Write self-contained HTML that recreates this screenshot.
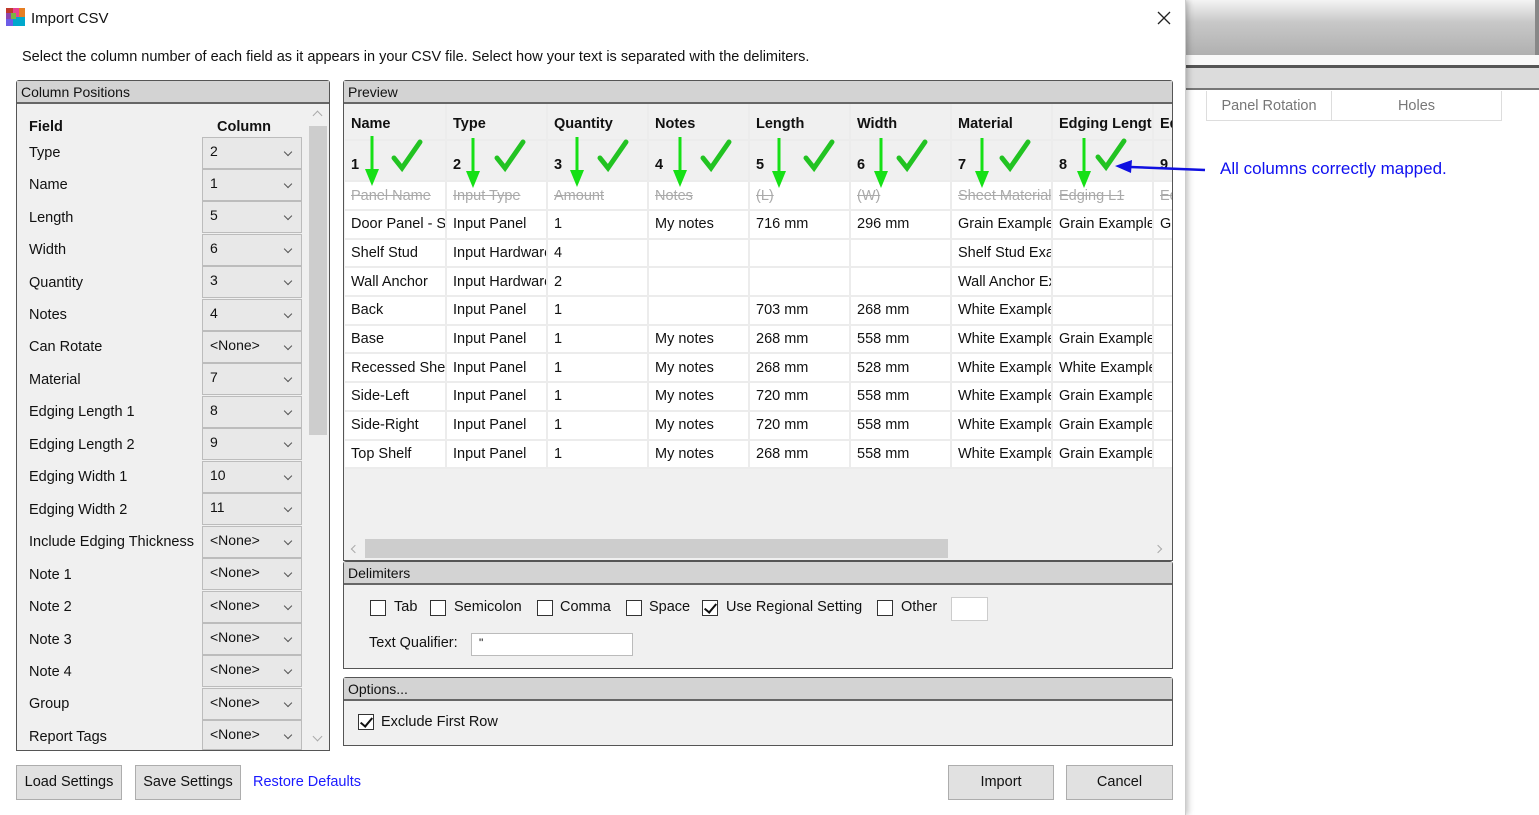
<!DOCTYPE html>
<html><head><meta charset="utf-8"><style>
*{margin:0;padding:0;box-sizing:border-box}
body{width:1539px;height:815px;overflow:hidden;background:#fff;font-family:"Liberation Sans",sans-serif;font-size:14px;color:#111;position:relative}
.a{position:absolute;white-space:nowrap}
.panel{position:absolute;border:1px solid #555;background:#f0f0f0;border-radius:3px 3px 0 0}
.ph{position:absolute;left:0;right:0;top:0;height:23px;background:#d3d3d3;border-bottom:2px solid #666;padding:3px 4px;font-size:14px}
.dd{position:absolute;left:202px;width:100px;height:32px;background:#e8e8e8;border:1px solid #bcbcbc;padding:5px 7px;font-size:14px}
.dd:after{content:"";position:absolute;right:10px;top:11px;width:5px;height:5px;border-right:1.3px solid #555;border-bottom:1.3px solid #555;transform:rotate(45deg)}
.fl{position:absolute;left:29px;font-size:14.5px}
table{border-collapse:collapse;table-layout:fixed;position:absolute;left:0;top:0;width:909px}
col{width:101px}
td{overflow:hidden;white-space:nowrap;padding:0 0 0 6px;border-right:2px solid #ececec;border-bottom:2px solid #ececec;font-size:14.5px;height:28.7px;background:#fff}
tr.h td{height:36px;font-weight:bold;background:#f0f0f0;padding-top:4px}
tr.n td{height:41px;font-weight:bold;background:#f0f0f0;padding-top:8px}
tr.s td{height:29px;color:#aaa;text-decoration:line-through}
.btn{position:absolute;top:765px;height:35px;background:#e1e1e1;border:1px solid #adadad;text-align:center;padding-top:8px;font-size:14.5px}
.cb{position:absolute;width:16px;height:16px;border:1px solid #333;background:#fff}
.ck:after{content:"";position:absolute;left:4px;top:0px;width:5px;height:10px;border-right:2px solid #111;border-bottom:2px solid #111;transform:rotate(40deg)}
</style></head><body>
<div class="a" style="left:1186px;top:0;width:353px;height:55px;background:linear-gradient(#f4f4f4,#c8c8c8 40%,#b0b0b0)"></div>
<div class="a" style="left:1186px;top:55px;width:353px;height:11px;background:#f8f8f8"></div>
<div class="a" style="left:1186px;top:65px;width:353px;height:3px;background:#555"></div>
<div class="a" style="left:1186px;top:68px;width:353px;height:22px;background:#dcdcdc;border-bottom:2px solid #777"></div>
<div class="a" style="left:1206px;top:91px;width:126px;height:30px;border-left:1px solid #ddd;border-right:1px solid #ddd;border-bottom:1px solid #ddd;color:#777;text-align:center;padding-top:7px;font-size:14.5px">Panel Rotation</div>
<div class="a" style="left:1332px;top:91px;width:170px;height:30px;border-right:1px solid #ddd;border-bottom:1px solid #ddd;color:#777;text-align:center;padding-top:7px;font-size:14.5px">Holes</div>
<div class="a" style="left:1535px;top:0;width:4px;height:55px;background:#888"></div>

<div class="a" style="left:0;top:0;width:1186px;height:815px;background:#fff;border-right:1px solid #ccc;box-shadow:2px 0 6px rgba(0,0,0,.25)"></div>
<svg class="a" style="left:6px;top:8px" width="20" height="20"><rect x="0" y="0" width="7" height="5" fill="#c0392b"/><rect x="7" y="0" width="6" height="9" fill="#e84393"/><rect x="13" y="0" width="6" height="9" fill="#e67e22"/><rect x="0" y="5" width="7" height="6" fill="#8e44ad"/><rect x="7" y="9" width="12" height="9" fill="#00a8cc"/><rect x="0" y="11" width="7" height="7" fill="#6c5ce7"/><rect x="5" y="5" width="5" height="6" fill="#7cb342"/></svg>
<div class="a" style="left:31px;top:10px;font-size:15px">Import CSV</div>
<svg class="a" style="left:1157px;top:11px" width="14" height="14"><path d="M1 1L13 13M13 1L1 13" stroke="#222" stroke-width="1.3"/></svg>
<div class="a" style="left:22px;top:49px;font-size:14.5px">Select the column number of each field as it appears in your CSV file. Select how your text is separated with the delimiters.</div>

<div class="panel" style="left:16px;top:80px;width:314px;height:671px">
<div class="ph">Column Positions</div>
<div class="a" style="left:291px;top:24px;width:20px;height:645px;background:#f0f0f0"></div>
<div class="a" style="left:292px;top:45px;width:18px;height:309px;background:#cdcdcd"></div>
<div class="a" style="left:297px;top:31px;width:7px;height:7px;border-left:1.2px solid #aaa;border-top:1.2px solid #aaa;transform:rotate(45deg)"></div>
<div class="a" style="left:297px;top:652px;width:7px;height:7px;border-right:1.2px solid #aaa;border-bottom:1.2px solid #aaa;transform:rotate(45deg)"></div>
</div>
<div class="a" style="left:29px;top:119px;font-weight:bold;font-size:14.5px">Field</div>
<div class="a" style="left:217px;top:119px;font-weight:bold;font-size:14.5px">Column</div>
<div class="fl" style="top:145px">Type</div><div class="dd" style="top:137px">2</div>
<div class="fl" style="top:177px">Name</div><div class="dd" style="top:169px">1</div>
<div class="fl" style="top:210px">Length</div><div class="dd" style="top:201px">5</div>
<div class="fl" style="top:242px">Width</div><div class="dd" style="top:234px">6</div>
<div class="fl" style="top:275px">Quantity</div><div class="dd" style="top:266px">3</div>
<div class="fl" style="top:307px">Notes</div><div class="dd" style="top:299px">4</div>
<div class="fl" style="top:339px">Can Rotate</div><div class="dd" style="top:331px">&lt;None&gt;</div>
<div class="fl" style="top:372px">Material</div><div class="dd" style="top:363px">7</div>
<div class="fl" style="top:404px">Edging Length 1</div><div class="dd" style="top:396px">8</div>
<div class="fl" style="top:437px">Edging Length 2</div><div class="dd" style="top:428px">9</div>
<div class="fl" style="top:469px">Edging Width 1</div><div class="dd" style="top:461px">10</div>
<div class="fl" style="top:502px">Edging Width 2</div><div class="dd" style="top:493px">11</div>
<div class="fl" style="top:534px">Include Edging Thickness</div><div class="dd" style="top:526px">&lt;None&gt;</div>
<div class="fl" style="top:567px">Note 1</div><div class="dd" style="top:558px">&lt;None&gt;</div>
<div class="fl" style="top:599px">Note 2</div><div class="dd" style="top:591px">&lt;None&gt;</div>
<div class="fl" style="top:632px">Note 3</div><div class="dd" style="top:623px">&lt;None&gt;</div>
<div class="fl" style="top:664px">Note 4</div><div class="dd" style="top:655px">&lt;None&gt;</div>
<div class="fl" style="top:696px">Group</div><div class="dd" style="top:688px">&lt;None&gt;</div>
<div class="fl" style="top:729px">Report Tags</div><div class="dd" style="top:720px;height:30px">&lt;None&gt;</div>

<div class="panel" style="left:343px;top:80px;width:830px;height:481px">
<div class="ph">Preview</div>
</div>
<div class="a" style="left:345px;top:104px;width:827px;height:456px;overflow:hidden;background:#f0f0f0">
<table>
<colgroup><col><col><col><col><col><col><col><col><col></colgroup>
<tr class="h"><td>Name</td><td>Type</td><td>Quantity</td><td>Notes</td><td>Length</td><td>Width</td><td>Material</td><td>Edging Lengt</td><td>Edging</td></tr>
<tr class="n"><td>1</td><td>2</td><td>3</td><td>4</td><td>5</td><td>6</td><td>7</td><td>8</td><td>9</td></tr>
<tr class="s"><td>Panel Name</td><td>Input Type</td><td>Amount</td><td>Notes</td><td>(L)</td><td>(W)</td><td>Sheet Material</td><td>Edging L1</td><td>Edging</td></tr>
<tr><td>Door Panel - Shaker</td><td>Input Panel</td><td>1</td><td>My notes</td><td>716 mm</td><td>296 mm</td><td>Grain Example</td><td>Grain Example</td><td>Grain</td></tr>
<tr><td>Shelf Stud</td><td>Input Hardware</td><td>4</td><td></td><td></td><td></td><td>Shelf Stud Example</td><td></td><td></td></tr>
<tr><td>Wall Anchor</td><td>Input Hardware</td><td>2</td><td></td><td></td><td></td><td>Wall Anchor Example</td><td></td><td></td></tr>
<tr><td>Back</td><td>Input Panel</td><td>1</td><td></td><td>703 mm</td><td>268 mm</td><td>White Example</td><td></td><td></td></tr>
<tr><td>Base</td><td>Input Panel</td><td>1</td><td>My notes</td><td>268 mm</td><td>558 mm</td><td>White Example</td><td>Grain Example</td><td></td></tr>
<tr><td>Recessed Shelf</td><td>Input Panel</td><td>1</td><td>My notes</td><td>268 mm</td><td>528 mm</td><td>White Example</td><td>White Example</td><td></td></tr>
<tr><td>Side-Left</td><td>Input Panel</td><td>1</td><td>My notes</td><td>720 mm</td><td>558 mm</td><td>White Example</td><td>Grain Example</td><td></td></tr>
<tr><td>Side-Right</td><td>Input Panel</td><td>1</td><td>My notes</td><td>720 mm</td><td>558 mm</td><td>White Example</td><td>Grain Example</td><td></td></tr>
<tr><td>Top Shelf</td><td>Input Panel</td><td>1</td><td>My notes</td><td>268 mm</td><td>558 mm</td><td>White Example</td><td>Grain Example</td><td></td></tr>
</table>
<div class="a" style="left:20px;top:435px;width:583px;height:19px;background:#cdcdcd"></div>
<div class="a" style="left:7px;top:442px;width:6px;height:6px;border-left:1.2px solid #aaa;border-bottom:1.2px solid #aaa;transform:rotate(45deg)"></div>
<div class="a" style="left:810px;top:442px;width:6px;height:6px;border-right:1.2px solid #aaa;border-top:1.2px solid #aaa;transform:rotate(45deg)"></div>
</div>

<svg class="a" style="left:0;top:0" width="1539" height="260">
<defs><g id="ar"><path d="M0 0V40" stroke="#16e016" stroke-width="3"/><path d="M-7 33L0 50L7 33Z" fill="#16e016"/></g>
<g id="ck"><path d="M0 16L8 26L26 0" fill="none" stroke="#22c322" stroke-width="5" stroke-linecap="round"/></g></defs>
<use href="#ar" x="372" y="136"/><use href="#ar" x="473" y="138"/><use href="#ar" x="577" y="137"/><use href="#ar" x="680" y="137"/><use href="#ar" x="779" y="138"/><use href="#ar" x="881" y="138"/><use href="#ar" x="982" y="138"/><use href="#ar" x="1084" y="138"/>
<use href="#ck" x="394" y="142"/><use href="#ck" x="497" y="142"/><use href="#ck" x="600" y="142"/><use href="#ck" x="703" y="142"/><use href="#ck" x="806" y="142"/><use href="#ck" x="899" y="142"/><use href="#ck" x="1002" y="142"/><use href="#ck" x="1098" y="141"/>
<path d="M1205 170L1130 167" stroke="#1010e0" stroke-width="2.5"/><path d="M1115 166L1132 160L1131 173Z" fill="#1010e0"/>
<text x="1220" y="174" font-family="Liberation Sans" font-size="17" fill="#1010f0">All columns correctly mapped.</text>
</svg>

<div class="panel" style="left:343px;top:561px;width:830px;height:108px"><div class="ph">Delimiters</div></div>
<div class="cb" style="left:370px;top:600px"></div><div class="a" style="left:394px;top:599px;font-size:14.5px">Tab</div>
<div class="cb" style="left:430px;top:600px"></div><div class="a" style="left:454px;top:599px;font-size:14.5px">Semicolon</div>
<div class="cb" style="left:537px;top:600px"></div><div class="a" style="left:560px;top:599px;font-size:14.5px">Comma</div>
<div class="cb" style="left:626px;top:600px"></div><div class="a" style="left:649px;top:599px;font-size:14.5px">Space</div>
<div class="cb ck" style="left:702px;top:600px"></div><div class="a" style="left:726px;top:599px;font-size:14.5px">Use Regional Setting</div>
<div class="cb" style="left:877px;top:600px"></div><div class="a" style="left:901px;top:599px;font-size:14.5px">Other</div>
<div class="a" style="left:951px;top:597px;width:37px;height:24px;background:#fff;border:1px solid #ccc"></div>
<div class="a" style="left:369px;top:635px;font-size:14.5px">Text Qualifier:</div>
<div class="a" style="left:471px;top:633px;width:162px;height:23px;background:#fff;border:1px solid #bbb;padding:2px 7px;font-size:12px">"</div>

<div class="panel" style="left:343px;top:677px;width:830px;height:69px"><div class="ph">Options...</div></div>
<div class="cb ck" style="left:358px;top:714px"></div><div class="a" style="left:381px;top:714px;font-size:14.5px">Exclude First Row</div>

<div class="btn" style="left:16px;width:106px">Load Settings</div>
<div class="btn" style="left:135px;width:106px">Save Settings</div>
<div class="a" style="left:253px;top:774px;color:#1a1aff;font-size:14.5px">Restore Defaults</div>
<div class="btn" style="left:948px;width:106px">Import</div>
<div class="btn" style="left:1066px;width:107px">Cancel</div>
</body></html>
